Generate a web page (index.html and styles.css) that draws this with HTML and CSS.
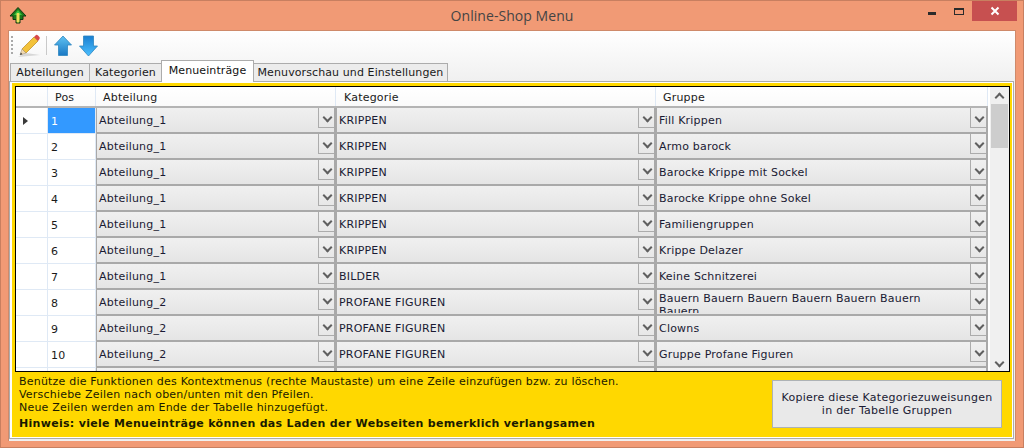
FILE: index.html
```html
<!DOCTYPE html>
<html lang="de">
<head>
<meta charset="utf-8">
<title>Online-Shop Menu</title>
<link rel="stylesheet" href="styles.css">
</head>
<body>
<div class="window">
  <header class="titlebar">
    <svg class="appicon" width="18" height="17" viewBox="0 0 18 17"><path d="M9 .5 L17 9 L14 9 L14 12.500 L11 12.500 L11 16 L7 16 L7 12.500 L4 12.500 L4 9 L1 9 Z" fill="#1c7a1c" stroke="#12360f" stroke-width="1"/><path d="M9 3 L13 8 L5 8 Z" fill="#3fc43f"/><rect x="7.500" y="6" width="3" height="9.500" rx="1" fill="#efe05a"/></svg>
    <div class="title">Online-Shop Menu</div>
    <div class="controls">
      <div class="ctl"><span class="min"></span></div>
      <div class="ctl"><span class="max"></span></div>
      <div class="close"><svg width="10" height="10" viewBox="0 0 10 10"><path d="M1.500 1.500 L8.500 8.500 M8.500 1.500 L1.500 8.500" stroke="#fff" stroke-width="2"/></svg></div>
    </div>
  </header>
  <main class="client">
    <div class="toolbar">
      <div class="grip"></div>
      <svg class="tool" width="24" height="24" viewBox="0 0 24 24"><path d="M0 23 L22 21 L8 19 Z" fill="#c9c9c9" opacity=".7"/><path d="M4 15 L16 3 L20 7 L8 19 Z" fill="#f3c23a" stroke="#b98a1e" stroke-width=".7"/><path d="M4 15 L2 21 L8 19 Z" fill="#f1d9b0" stroke="#9a8a70" stroke-width=".5"/><path d="M2.800 18.500 L2 21 L4.500 20.200 Z" fill="#444"/><path d="M16 3 L18 1 Q19 0.500 20 1.500 L21.500 3 Q22 4 21.500 5 L20 7 Z" fill="#d8484a"/></svg>
      <div class="sep"></div>
      <svg class="tool up" width="18" height="22" viewBox="0 0 18 22"><defs><linearGradient id="ga" x1="0" y1="0" x2="0" y2="1"><stop offset="0" stop-color="#5ec2f2"/><stop offset="1" stop-color="#1a78c4"/></linearGradient><linearGradient id="gb" x1="0" y1="0" x2="0" y2="1"><stop offset="0" stop-color="#1a7fd0"/><stop offset="1" stop-color="#4cc0ff"/></linearGradient></defs><path d="M9 1 L17.500 10 L13.500 10 L13.500 20.500 L4.500 20.500 L4.500 10 L.5 10 Z" fill="url(#ga)" stroke="#2d86c0" stroke-width=".8"/></svg>
      <svg class="tool" width="19" height="22" viewBox="0 0 19 22"><path d="M9.500 21 L18.500 11 L14.500 11 L14.500 1 L4.500 1 L4.500 11 L.5 11 Z" fill="url(#gb)" stroke="#2d86c0" stroke-width=".8"/></svg>
    </div>
    <nav class="tabs">
      <div class="tab">Abteilungen</div>
      <div class="tab">Kategorien</div>
      <div class="tab active">Menueinträge</div>
      <div class="tab">Menuvorschau und Einstellungen</div>
    </nav>
    <section class="page">
      <div class="panel">
        <div class="grid">
          <div class="table">
            <div class="head">
              <div class="hc c0"></div>
              <div class="hc c1">Pos</div>
              <div class="hc c2">Abteilung</div>
              <div class="hc c3">Kategorie</div>
              <div class="hc c4">Gruppe</div>
            </div>
            <div class="row">
              <div class="rh c0"><span class="marker"></span></div><div class="pos c1 selected">1</div>
              <div class="combo c2"><span class="val">Abteilung_1</span><span class="drop"></span></div>
              <div class="combo c3"><span class="val">KRIPPEN</span><span class="drop"></span></div>
              <div class="combo c4"><span class="val">Fill Krippen</span><span class="drop"></span></div>
            </div>
            <div class="row">
              <div class="rh c0"></div><div class="pos c1">2</div>
              <div class="combo c2"><span class="val">Abteilung_1</span><span class="drop"></span></div>
              <div class="combo c3"><span class="val">KRIPPEN</span><span class="drop"></span></div>
              <div class="combo c4"><span class="val">Armo barock</span><span class="drop"></span></div>
            </div>
            <div class="row">
              <div class="rh c0"></div><div class="pos c1">3</div>
              <div class="combo c2"><span class="val">Abteilung_1</span><span class="drop"></span></div>
              <div class="combo c3"><span class="val">KRIPPEN</span><span class="drop"></span></div>
              <div class="combo c4"><span class="val">Barocke Krippe mit Sockel</span><span class="drop"></span></div>
            </div>
            <div class="row">
              <div class="rh c0"></div><div class="pos c1">4</div>
              <div class="combo c2"><span class="val">Abteilung_1</span><span class="drop"></span></div>
              <div class="combo c3"><span class="val">KRIPPEN</span><span class="drop"></span></div>
              <div class="combo c4"><span class="val">Barocke Krippe ohne Sokel</span><span class="drop"></span></div>
            </div>
            <div class="row">
              <div class="rh c0"></div><div class="pos c1">5</div>
              <div class="combo c2"><span class="val">Abteilung_1</span><span class="drop"></span></div>
              <div class="combo c3"><span class="val">KRIPPEN</span><span class="drop"></span></div>
              <div class="combo c4"><span class="val">Familiengruppen</span><span class="drop"></span></div>
            </div>
            <div class="row">
              <div class="rh c0"></div><div class="pos c1">6</div>
              <div class="combo c2"><span class="val">Abteilung_1</span><span class="drop"></span></div>
              <div class="combo c3"><span class="val">KRIPPEN</span><span class="drop"></span></div>
              <div class="combo c4"><span class="val">Krippe Delazer</span><span class="drop"></span></div>
            </div>
            <div class="row">
              <div class="rh c0"></div><div class="pos c1">7</div>
              <div class="combo c2"><span class="val">Abteilung_1</span><span class="drop"></span></div>
              <div class="combo c3"><span class="val">BILDER</span><span class="drop"></span></div>
              <div class="combo c4"><span class="val">Keine Schnitzerei</span><span class="drop"></span></div>
            </div>
            <div class="row">
              <div class="rh c0"></div><div class="pos c1">8</div>
              <div class="combo c2"><span class="val">Abteilung_2</span><span class="drop"></span></div>
              <div class="combo c3"><span class="val">PROFANE FIGUREN</span><span class="drop"></span></div>
              <div class="combo c4"><span class="val wrap">Bauern Bauern Bauern Bauern Bauern Bauern Bauern</span><span class="drop"></span></div>
            </div>
            <div class="row">
              <div class="rh c0"></div><div class="pos c1">9</div>
              <div class="combo c2"><span class="val">Abteilung_2</span><span class="drop"></span></div>
              <div class="combo c3"><span class="val">PROFANE FIGUREN</span><span class="drop"></span></div>
              <div class="combo c4"><span class="val">Clowns</span><span class="drop"></span></div>
            </div>
            <div class="row">
              <div class="rh c0"></div><div class="pos c1">10</div>
              <div class="combo c2"><span class="val">Abteilung_2</span><span class="drop"></span></div>
              <div class="combo c3"><span class="val">PROFANE FIGUREN</span><span class="drop"></span></div>
              <div class="combo c4"><span class="val">Gruppe Profane Figuren</span><span class="drop"></span></div>
            </div>
            <div class="row">
              <div class="rh c0"></div><div class="pos c1"></div>
              <div class="combo c2"></div><div class="combo c3"></div><div class="combo c4"></div>
            </div>
          </div>
          <div class="scrollbar">
            <span class="sb-up"></span>
            <div class="track"><div class="thumb"></div></div>
            <span class="sb-down"></span>
          </div>
        </div>
        <div class="footer">
          <div class="notes">
            <p>Benütze die Funktionen des Kontextmenus (rechte Maustaste) um eine Zeile einzufügen bzw. zu löschen.</p>
            <p>Verschiebe Zeilen nach oben/unten mit den Pfeilen.</p>
            <p>Neue Zeilen werden am Ende der Tabelle hinzugefügt.</p>
            <p class="hint">Hinweis: viele Menueinträge können das Laden der Webseiten bemerklich verlangsamen</p>
          </div>
          <button class="copy">Kopiere diese Kategoriezuweisungen<br>in der Tabelle Gruppen</button>
        </div>
      </div>
    </section>
  </main>
</div>
</body>
</html>
```

FILE: styles.css
```css
* { box-sizing: border-box; }
html, body { margin: 0; height: 100%; }
body { font: 11px "DejaVu Sans", Verdana, sans-serif; letter-spacing: .2px; color: #1a1a1a; overflow: hidden; }
p { margin: 0; }

.window { width: 1024px; height: 448px; background: #f19a75; border: 1px solid #c87f60; display: flex; flex-direction: column; padding: 0 7px 6px; }

.titlebar { height: 29px; flex: none; display: flex; align-items: flex-start; position: relative; }
.appicon { margin: 6px 0 0 1px; }
.title { position: absolute; left: 0; right: 0; top: 5px; text-align: center; font: 14px "Open Sans", sans-serif; letter-spacing: .05px; color: #444; }
.controls { margin-left: auto; display: flex; align-items: flex-start; margin-right: -1px; }
.ctl { width: 29px; height: 20px; position: relative; }
.min { position: absolute; left: 14px; top: 11px; width: 8px; height: 3px; background: #2b2b2b; }
.max { position: absolute; left: 11px; top: 7px; width: 10px; height: 7px; border: 1px solid #2b2b2b; border-top-width: 2px; }
.close { width: 45px; height: 20px; background: #c75050; display: flex; align-items: center; justify-content: center; }

.client { flex: 1; min-height: 0; border: 1px solid #cf8a6a; border-bottom: 0; background: linear-gradient(#fff, #f0f0f0 50px); display: flex; flex-direction: column; }

.toolbar { height: 29px; flex: none; display: flex; align-items: center; padding: 0 0 0 2px; }
.grip { width: 2px; height: 19px; background: repeating-linear-gradient(#a9a9a9 0 2px, transparent 2px 4px); margin-right: 5px; }
.sep { width: 1px; height: 19px; background: #c9c9c9; margin: 0 7px 0 4px; }
.tool { display: block; }
.up { margin-right: 7px; }

.tabs { display: grid; grid-template-columns: 79px 72px 92px 194px; height: 21px; flex: none; padding-left: 1px; align-items: end; position: relative; letter-spacing: .1px; }
.tab { height: 18px; padding-top: 2px; text-align: center; background: #ececec; border: 1px solid #acacac; border-bottom: 0; margin-right: -1px; line-height: 14px; white-space: nowrap; }
.tab.active { height: 22px; background: #fff; padding-top: 3px; position: relative; z-index: 2; margin-bottom: -1px; color: #111; }

.page { flex: 1; min-height: 0; margin: 0 1px 2px 0; border: 1px solid #acacac; background: #fff; padding: 1px 1px 1px 2px; display: flex; }
.panel { flex: 1; min-width: 0; background: #ffd800; padding: 3px 2px 0 3px; display: flex; flex-direction: column; }

.grid { height: 286px; flex: none; border: 1px solid #000; background: #f0f0f0; display: flex; overflow: hidden; }
.table { width: 972px; flex: none; background: #fff; }
.head { display: flex; height: 21px; background: linear-gradient(#fff, #fafafa); border-bottom: 2px solid #b4b4b4; }
.hc { line-height: 21px; padding-left: 7px; border-right: 1px solid #dfe9f5; }
.c0 { width: 32px; flex: none; }
.c1 { width: 48px; flex: none; }
.c2 { width: 240px; flex: none; }
.c3 { width: 320px; flex: none; }
.c4 { width: 332px; flex: none; }
.head .c3 { padding-left: 8px; }

.row { display: flex; height: 26px; }
.rh { border-right: 1px solid #dfe9f5; border-bottom: 1px solid #dfe9f5; display: flex; align-items: center; padding-left: 7px; background: #fff; }
.marker { width: 0; height: 0; border-left: 5px solid #3a3a3a; border-top: 4.500px solid transparent; border-bottom: 4.500px solid transparent; }
.pos { padding: 7px 0 0 3px; border-right: 1px solid #dfe9f5; border-bottom: 1px solid #dfe9f5; line-height: 14px; }
.selected { background: #3399ff; color: #fff; }

.combo { position: relative; border: 0 solid #a9a9a9; border-width: 0 2px 2px 1px; background: linear-gradient(#f0f0f0, #e5e5e5); display: block; overflow: hidden; }
.val { position: absolute; left: 2px; right: 19px; top: 6px; line-height: 14px; white-space: nowrap; color: #1a1a33; }
.val.wrap { white-space: normal; right: 24px; top: 2px; bottom: 1px; line-height: 13px; overflow: hidden; }
.drop { position: absolute; right: 0; top: 0; width: 16px; height: 20px; border-left: 1px solid #acacac; border-bottom: 1px solid #acacac; }
.drop::after, .sb-up::after, .sb-down::after { content: ""; position: absolute; width: 5px; height: 5px; border-right: 2px solid #606060; border-bottom: 2px solid #606060; }
.drop::after { left: 5px; top: 6px; transform: rotate(45deg); }

.scrollbar { flex: 1; background: #f0f0f0; display: flex; flex-direction: column; border-left: 2px solid #fff; }
.sb-up, .sb-down { height: 17px; flex: none; position: relative; }
.sb-up::after { left: 6px; top: 7px; transform: rotate(-135deg); }
.sb-down::after { left: 6px; top: 5px; transform: rotate(45deg); }
.track { flex: 1; padding: 0 1px; }
.thumb { height: 44px; background: #cdcdcd; }

.footer { flex: 1; min-height: 0; display: flex; justify-content: space-between; padding: 3px 8px 0 4px; }
.notes { line-height: 13px; color: #1a1a00; }
.hint { font-weight: 700; letter-spacing: .3px; margin-top: 2px; line-height: 16px; }
.copy { width: 230px; height: 48px; margin-top: 5px; background: #e9e9e9; border: 1px solid #adb2b5; font: 11px "DejaVu Sans", sans-serif; letter-spacing: .25px; color: #1a1a33; line-height: 13px; padding: 0; }
```
